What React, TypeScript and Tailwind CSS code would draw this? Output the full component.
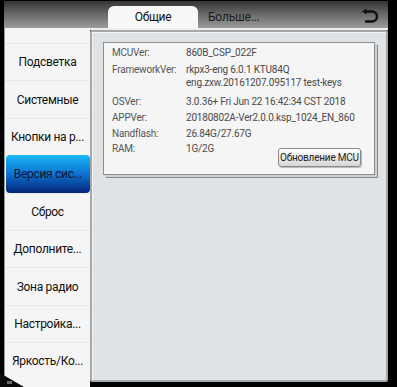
import React from "react";

const MENU = [
  "Подсветка",
  "Системные",
  "Кнопки на р...",
  "Версия сис...",
  "Сброс",
  "Дополните...",
  "Зона радио",
  "Настройка...",
  "Яркость/Ко...",
];

const INFO: { label: string; value: string[]; gap: string }[] = [
  { label: "MCUVer:", value: ["860B_CSP_022F"], gap: "mt-0" },
  {
    label: "FrameworkVer:",
    value: ["rkpx3-eng 6.0.1 KTU84Q", "eng.zxw.20161207.095117 test-keys"],
    gap: "mt-[4px]",
  },
  {
    label: "OSVer:",
    value: ["3.0.36+  Fri Jun 22 16:42:34 CST 2018"],
    gap: "mt-[6px]",
  },
  {
    label: "APPVer:",
    value: ["20180802A-Ver2.0.0.ksp_1024_EN_860"],
    gap: "mt-[3px]",
  },
  { label: "Nandflash:", value: ["26.84G/27.67G"], gap: "mt-[3px]" },
];

function BackIcon() {
  return (
    <svg width="18" height="16" viewBox="0 0 18 16" fill="none">
      <path
        d="M4 3.5 H11 a5 5 0 0 1 0 10 H4"
        stroke="#111"
        strokeWidth="2.4"
        strokeLinecap="butt"
      />
      <path d="M1 3.5 L5.5 0.5 L5.5 6.5 Z" fill="#111" />
    </svg>
  );
}

export default function App() {
  return (
    <div className="relative w-[397px] h-[387px] bg-black overflow-hidden font-['Roboto',sans-serif]">
      <div className="flex flex-col h-full pl-[4px] pr-[9px] pt-[1px]">
        {/* Header with tabs */}
        <div className="h-[27px] flex items-end bg-gradient-to-b from-[#353535] via-[#6a6a6a] to-[#9c9c9c] shrink-0">
          <div className="w-[104px]" />
          <div className="w-[90px] h-[22px] rounded-t-[6px] bg-[#f7f7f7] flex items-center justify-center text-[12px] tracking-[-0.3px] text-[#111]">
            Общие
          </div>
          <div className="h-[22px] ml-[10px] flex items-center text-[12px] tracking-[-0.2px] text-[#1a1a1a]">
            Больше...
          </div>
          <div className="ml-auto mr-[9px] self-center pt-[2px]">
            <BackIcon />
          </div>
        </div>

        <div className="flex flex-1 min-h-0">
          {/* Sidebar */}
          <div className="w-[86px] bg-[#f5f5f5] border-l border-[#9a9a9a] pt-[15px] flex flex-col">
            {MENU.map((m, i) =>
              i === 3 ? (
                <div
                  key={m}
                  className="h-[37.4px] ml-[1px] rounded-[4px] bg-gradient-to-b from-[#1cb8f8] via-[#0f72d0] to-[#08237a] flex items-center justify-center text-[12px] tracking-[-0.3px] text-[#0b1530] whitespace-nowrap"
                >
                  {m}
                </div>
              ) : (
                <div
                  key={m}
                  className="h-[37.4px] border-t border-[#e8e8e8] flex items-center justify-center text-[12px] tracking-[-0.3px] text-[#111] whitespace-nowrap"
                >
                  {m}
                </div>
              )
            )}
          </div>

          {/* Content panel */}
          <div className="flex-1 flex flex-col pb-[5px]">
            <div className="h-[2px] bg-[#eceeef] shrink-0" />
            <div className="flex-1 border-2 border-[#a4a8aa] rounded-[2px] bg-[#dfe3e5] shadow-[inset_1px_1px_0_#f3f5f6] pt-[10px] pl-[11px]">
              <div className="w-[272px] border border-[#8e8e8e] bg-[#f6f5f5] shadow-[2px_2px_0_#cfcfcf,3px_3px_0_#8a8a8a] pl-[8px] pr-[13px] pt-[3px] pb-[7px] text-[10px] tracking-[-0.2px] leading-[13px] text-[#4a4a4a]">
                {INFO.map((r) => (
                  <div key={r.label} className={`flex ${r.gap}`}>
                    <div className="w-[74px] shrink-0 text-[#555]">{r.label}</div>
                    <div className="whitespace-nowrap">
                      {r.value.map((v) => (
                        <div key={v}>{v}</div>
                      ))}
                    </div>
                  </div>
                ))}
                <div className="flex items-start mt-[2px]">
                  <div className="w-[74px] shrink-0 text-[#555]">RAM:</div>
                  <div>1G/2G</div>
                  <button className="ml-auto mt-[6px] w-[83px] h-[19px] rounded-[3px] border border-[#8a8a8a] bg-gradient-to-b from-[#ffffff] to-[#d6d6d6] text-[10px] tracking-[-0.2px] whitespace-nowrap text-[#222] flex items-center justify-center shadow-[1px_1px_0_#bcbcbc]">
                    Обновление MCU
                  </button>
                </div>
              </div>
            </div>
          </div>
        </div>
      </div>

      {/* Bottom-left corner notch */}
      <svg className="absolute left-0 bottom-0" width="24" height="14" viewBox="0 0 24 14">
        <path d="M0 0 L24 14 L0 14 Z" fill="#0a0a0a" />
        <rect x="7" y="8" width="5" height="3" fill="#6a6a6a" />
      </svg>
    </div>
  );
}
